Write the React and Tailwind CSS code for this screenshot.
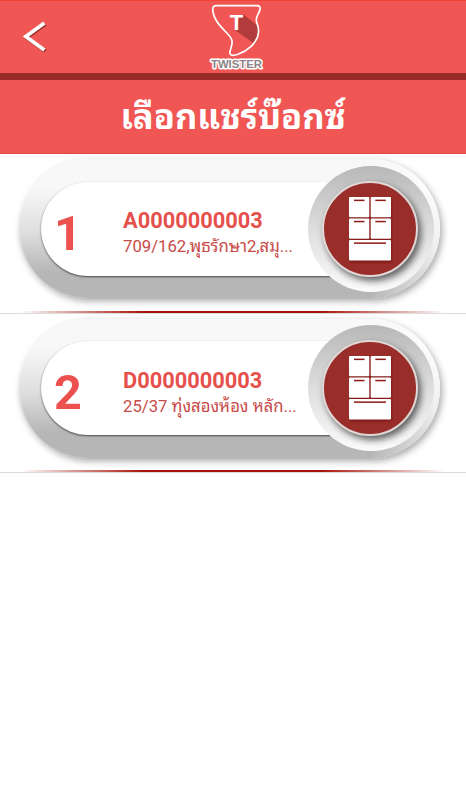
// src/pages/ShareBoxList.jsx
import React from "react";

const boxes = [
  { id: "A0000000003", address: "709/162,พุธรักษา2,สมุ..." },
  { id: "D0000000003", address: "25/37 ทุ่งสองห้อง หลัก..." },
];

const BackIcon = () => (
  <svg width="24" height="34" viewBox="0 0 24 34" fill="none">
    <path d="M22.3 4 L3.6 17.5 L22.3 31" stroke="#8e2a26" strokeWidth="3.8" />
    <path d="M21.4 3 L2.8 16.5 L21.4 30" stroke="#fff" strokeWidth="3.8" />
  </svg>
);

const TwisterLogo = () => (
  <svg width="90" height="72" viewBox="0 0 90 72" fill="none">
    <path d="M48.5 14.5 L62.5 26 Q65 36 60.5 44.5 L40 30 L44 18 Z" fill="#b23c3c" />
    <path
      d="M21 5.6 H62 Q66 5.6 64.8 10 C64 14 61 16 61.3 20 C61.5 24 64 26 63.5 32 C63 43 52 51 43 54.3 C38 56 34 56 35 51.5 C36 47 38 44 36.8 40 C35 34 26 29 21 20 C18 15 15.5 5.6 21 5.6 Z"
      stroke="#fff"
      strokeWidth="1.7"
    />
    <text x="41.5" y="29.6" textAnchor="middle" fill="#fff" fontSize="22" fontWeight="700" fontFamily="Liberation Sans, sans-serif">
      T
    </text>
    <text
      x="16"
      y="68"
      textLength="51"
      lengthAdjust="spacingAndGlyphs"
      fill="#8c8486"
      stroke="#fff"
      strokeWidth="3"
      strokeLinejoin="round"
      paintOrder="stroke"
      fontSize="11.5"
      fontWeight="700"
      fontFamily="Liberation Sans, sans-serif"
    >
      TWISTER
    </text>
  </svg>
);

const FridgeIcon = () => (
  <svg width="42" height="64" viewBox="0 0 42 64" className="drop-shadow-[1px_2px_1px_rgba(90,0,0,0.4)]">
    <g fill="#fff">
      <rect width="20.3" height="20.2" rx="1" />
      <rect x="21.7" width="20.3" height="20.2" rx="1" />
      <rect y="21.6" width="20.3" height="20.2" rx="1" />
      <rect x="21.7" y="21.6" width="20.3" height="20.2" rx="1" />
      <rect y="43" width="42" height="20.4" rx="1" />
    </g>
    <g fill="#8e1a18">
      <rect x="5" y="2.6" width="10.5" height="1.5" />
      <rect x="26.3" y="2.6" width="10.5" height="1.5" />
      <rect x="5" y="23.8" width="10.5" height="1.5" />
      <rect x="26.3" y="23.8" width="10.5" height="1.5" />
      <rect x="5" y="45.4" width="32" height="1.5" />
    </g>
  </svg>
);

const BoxRow = ({ number, box }) => (
  <li className="flex h-[159.6px] flex-col border-b border-[#dcdcdc]">
    <div className="mt-[5px] ml-[19px] flex h-[139px] w-[421px] shrink-0 items-center rounded-full bg-linear-to-b from-[#f8f8f8] from-20% via-[#dedede] via-53% to-[#b6b6b6] to-82% pl-[22px] shadow-[2px_3px_7px_rgba(0,0,0,0.35)]">
      <div className="flex h-[94px] w-[330px] shrink-0 items-center rounded-l-full bg-white shadow-[0_1px_2px_rgba(0,0,0,0.6)]">
        <span className="w-[82px] pt-[11px] pl-[13px] text-[48.5px] leading-none font-bold text-[#ec514f]">{number}</span>
        <div className="w-[190px] pt-[11px] whitespace-nowrap">
          <p className="text-[21.8px] leading-[26px] font-bold text-[#e5504d]">{box.id}</p>
          <p className="text-[16.7px] leading-[26px] text-[#c74a48]">{box.address}</p>
        </div>
      </div>
      {/* Round button, overlaps the end of the label */}
      <div className="-ml-[133px] flex h-[139px] w-[202px] shrink-0 items-center rounded-r-full bg-linear-to-r from-transparent from-65% to-white/70 pl-[70px]">
        <div className="flex size-[126px] shrink-0 items-center justify-center rounded-full bg-linear-to-b from-[#b8b8b8] via-[#dedede] to-[#fbfbfb]">
          <div className="mr-[2px] flex size-[96px] items-center justify-center rounded-full border-2 border-[#e0d8d7] bg-[#992d29] shadow-[3px_4px_7px_rgba(0,0,0,0.6)]">
            <FridgeIcon />
          </div>
        </div>
      </div>
    </div>
    <div className="mt-auto ml-[20px] flex h-[2px] w-[425px]">
      <div className="w-[125px] bg-linear-to-r from-transparent to-[#a81208]" />
      <div className="flex-1 bg-[#a81208]" />
      <div className="w-[125px] bg-linear-to-r from-[#a81208] to-transparent" />
    </div>
  </li>
);

const App = () => {
  return (
    <div className="min-h-screen w-[466px] overflow-hidden bg-white font-['Roboto','Noto_Sans_Thai_Looped','Loma','Noto_Sans',sans-serif]">
      <header className="grid h-[80px] grid-cols-[195px_90px_1fr] border-t border-b-[7px] border-t-[#f44336] border-b-[#982b26] bg-[#f05654]">
        <button className="flex items-start pt-[19px] pl-[23px]" aria-label="Back">
          <BackIcon />
        </button>
        <div className="-mt-px">
          <TwisterLogo />
        </div>
      </header>

      <h1 className="flex h-[74px] items-center justify-center border-b border-[#d94a46] bg-[#f05654] pt-[3px] text-[34.5px] font-bold text-white">
        เลือกแชร์บ๊อกซ์
      </h1>

      <ul>
        {boxes.map((box, i) => (
          <BoxRow key={box.id} number={i + 1} box={box} />
        ))}
      </ul>
    </div>
  );
};

export default App;
